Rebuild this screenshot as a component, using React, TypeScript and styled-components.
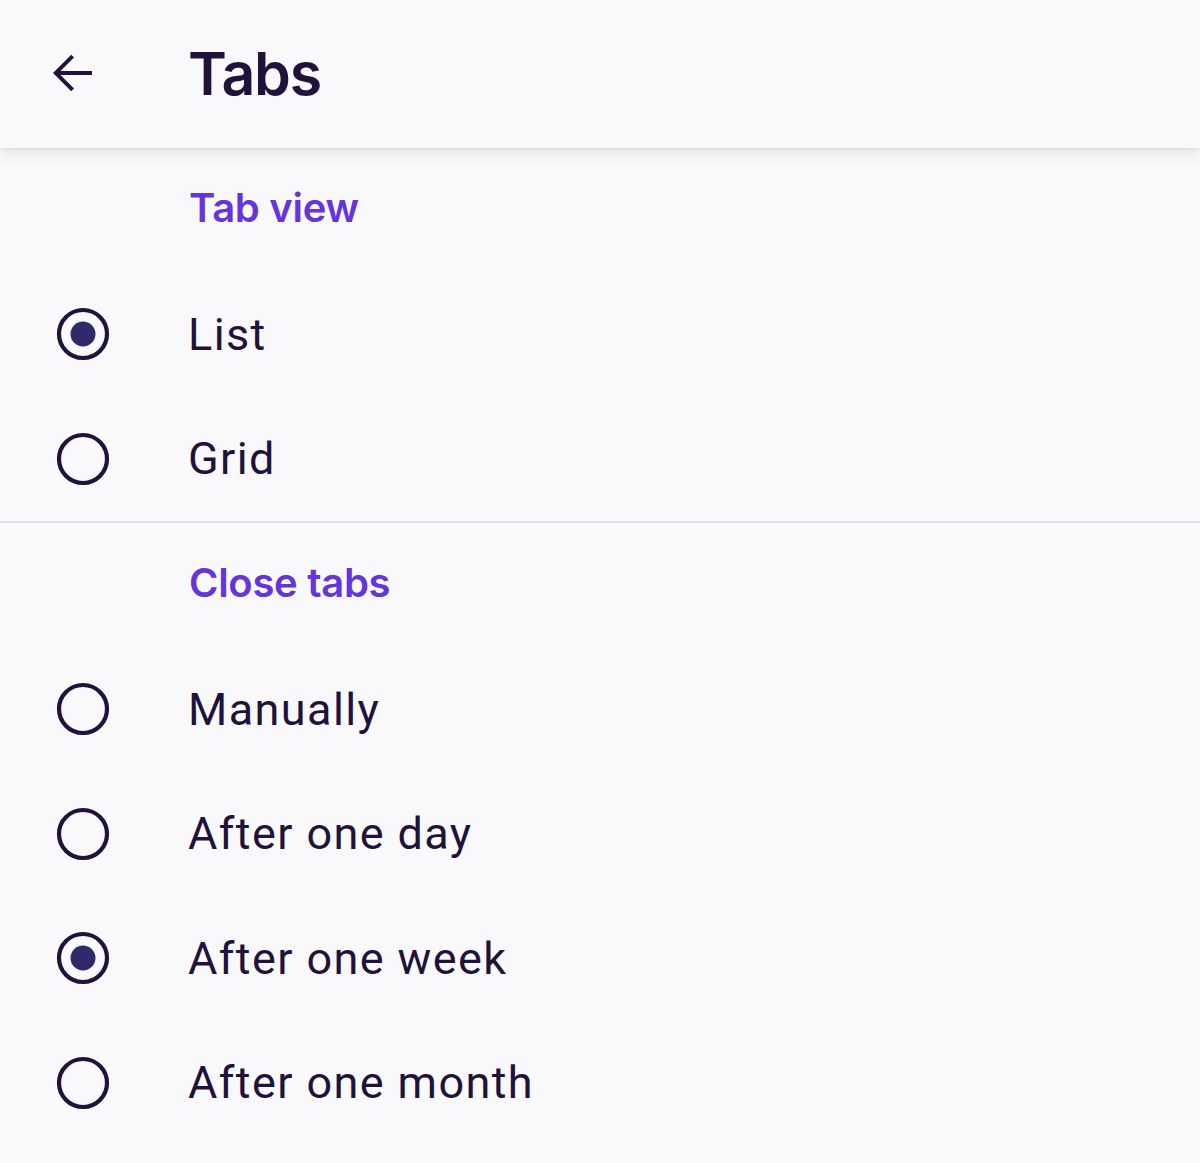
import styled, { createGlobalStyle } from "styled-components";

const GlobalStyle = createGlobalStyle`
  html, body {
    margin: 0;
    padding: 0;
    background: #f9f9fb;
  }
  body {
    font-family: Roboto, "Noto Sans", sans-serif;
    -webkit-font-smoothing: antialiased;
  }
`;

type Option = { label: string; checked?: boolean };

const tabView: Option[] = [{ label: "List", checked: true }, { label: "Grid" }];
const closeTabs: Option[] = [
  { label: "Manually" },
  { label: "After one day" },
  { label: "After one week", checked: true },
  { label: "After one month" },
];

const Radio = ({ checked }: { checked?: boolean }) => (
  <svg width="60" height="60" viewBox="0 0 60 60">
    <circle cx="30" cy="30" r="24" fill="none" stroke="#20123a" strokeWidth="4.2" />
    {checked && <circle cx="30" cy="30" r="12.5" fill="#312a6a" />}
  </svg>
);

const BackArrow = () => (
  <svg width="60" height="60" viewBox="0 0 24 24">
    <path
      d="M20 11.2H7.4l5.4-5.4-1.1-1.1L4.4 12l7.3 7.3 1.1-1.1-5.4-5.4H20z"
      fill="#20123a"
    />
  </svg>
);

const App = () => {
  return (
    <>
      <GlobalStyle />
      <Page>
        <Toolbar>
          <IconButton>
            <BackArrow />
          </IconButton>
          <Title>Tabs</Title>
        </Toolbar>
        <Section>
          <Category>Tab view</Category>
          {tabView.map((o) => (
            <Row key={o.label}>
              <RadioBox>
                <Radio checked={o.checked} />
              </RadioBox>
              <Label>{o.label}</Label>
            </Row>
          ))}
        </Section>
        <Divider />
        <Section>
          <Category>Close tabs</Category>
          {closeTabs.map((o) => (
            <Row key={o.label}>
              <RadioBox>
                <Radio checked={o.checked} />
              </RadioBox>
              <Label>{o.label}</Label>
            </Row>
          ))}
        </Section>
      </Page>
    </>
  );
};
export default App;

const Page = styled.main`
  width: 1200px;
  min-height: 1163px;
  background: #f9f9fb;
  overflow: hidden;
`;

const Toolbar = styled.header`
  position: relative;
  z-index: 1;
  height: 148px;
  display: flex;
  align-items: center;
  padding-left: 42px;
  background: #f9f9fb;
  box-shadow: 0 5px 14px rgba(20, 20, 40, 0.09), 0 1px 2px rgba(20, 20, 40, 0.07);
`;

const IconButton = styled.div`
  width: 60px;
  height: 60px;
  display: flex;
  margin-top: -2px;
`;

const Title = styled.h1`
  margin: -2px 0 0 86px;
  font-family: Inter, "Open Sans", sans-serif;
  font-weight: 600;
  font-size: 59px;
  letter-spacing: -1.2px;
  color: #20123a;
  line-height: 1;
`;

const Section = styled.section`
  display: flex;
  flex-direction: column;
`;

const Category = styled.h2`
  margin: 0;
  height: 124px;
  display: flex;
  align-items: center;
  padding-left: 189px;
  font-family: Inter, "Open Sans", sans-serif;
  font-weight: 600;
  font-size: 40px;
  letter-spacing: -0.3px;
  color: #6434dc;
  line-height: 1;
  margin-top: -2px;
  margin-bottom: 2px;
`;

const Row = styled.div`
  height: 124.5px;
  display: flex;
  align-items: center;
  padding-left: 53px;
`;

const RadioBox = styled.div`
  width: 60px;
  height: 60px;
  display: flex;
`;

const Label = styled.span`
  margin-left: 75px;
  font-family: Roboto, "Noto Sans", sans-serif;
  font-size: 45px;
  letter-spacing: 1.4px;
  color: #20123a;
  line-height: 1;
`;

const Divider = styled.hr`
  margin: 0;
  border: none;
  height: 2px;
  background: #e1e0e6;
`;
